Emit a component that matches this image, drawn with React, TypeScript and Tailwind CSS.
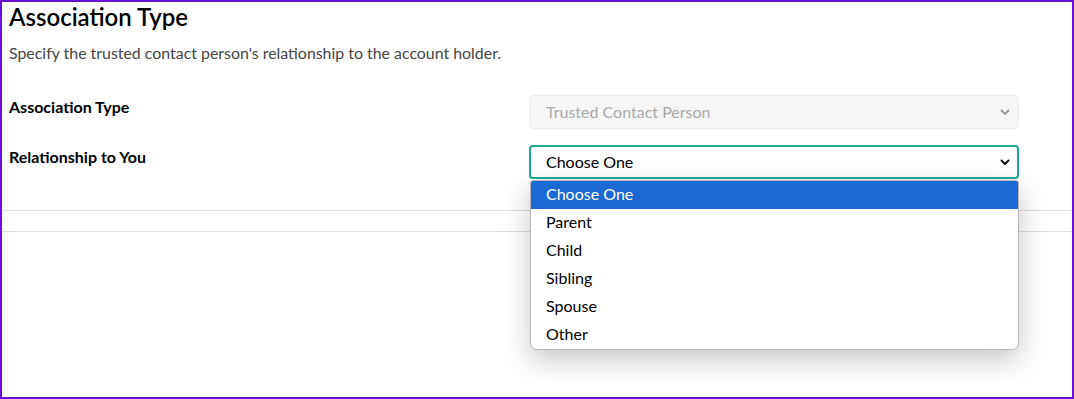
import React from "react";

const Chevron = ({ color }: { color: string }) => (
  <svg width="10" height="7" viewBox="0 0 10 7" fill="none">
    <path d="M1.5 1.5L5 5L8.5 1.5" stroke={color} strokeWidth="2" strokeLinecap="round" strokeLinejoin="round" />
  </svg>
);

const options = ["Choose One", "Parent", "Child", "Sibling", "Spouse", "Other"];

export default function App() {
  return (
    <div
      className="w-[1074px] h-[399px] border-2 border-[#6a10d9] bg-white overflow-hidden text-[#111]"
      style={{ fontFamily: "Lato, 'Open Sans', sans-serif" }}
    >
      <div className="pl-[7px] pt-[1px]">
        <h1 className="text-[24px] leading-[28px] font-semibold text-black">Association Type</h1>
        <p className="mt-[12px] text-[15.9px] leading-[20px] text-[#444]">
          Specify the trusted contact person's relationship to the account holder.
        </p>
        <div className="mt-[32px] flex flex-col gap-[16px]">
          <div className="flex items-start">
            <div className="w-[520px] pt-[2px] text-[16px] font-bold text-black leading-[20px]">Association Type</div>
            <div className="w-[490px] h-[34px] rounded-[5px] border border-[#ececec] bg-[#f6f6f6] flex items-center justify-between pl-[16px] pr-[8px]">
              <span className="text-[16px] text-[#a9a9a9]">Trusted Contact Person</span>
              <Chevron color="#9a9a9a" />
            </div>
          </div>
          <div className="flex items-start">
            <div className="w-[520px] pt-[2px] text-[16px] font-bold text-black leading-[20px]">Relationship to You</div>
            <div className="relative w-[490px]">
              <div className="h-[34px] rounded-[4px] border-2 border-[#1ea896] bg-white flex items-center justify-between pl-[15px] pr-[7px]">
                <span className="text-[16px] text-black">Choose One</span>
                <Chevron color="#111" />
              </div>
              <div className="absolute left-[1px] top-[35px] w-[489px] z-10 bg-white border border-[#b5b5b5] rounded-b-[7px] rounded-t-[3px] overflow-hidden shadow-[0_10px_28px_rgba(0,0,0,0.22)]">
                {options.map((o, i) => (
                  <div
                    key={o}
                    className={
                      "h-[28px] pl-[15px] pb-[3px] flex items-center text-[16px] " +
                      (i === 0 ? "bg-[#1b69d3] text-white" : "text-black")
                    }
                  >
                    {o}
                  </div>
                ))}
              </div>
            </div>
          </div>
        </div>
      </div>
      <div className="mt-[31px] h-[22px] border-t border-b border-[#dedede]" />
    </div>
  );
}
